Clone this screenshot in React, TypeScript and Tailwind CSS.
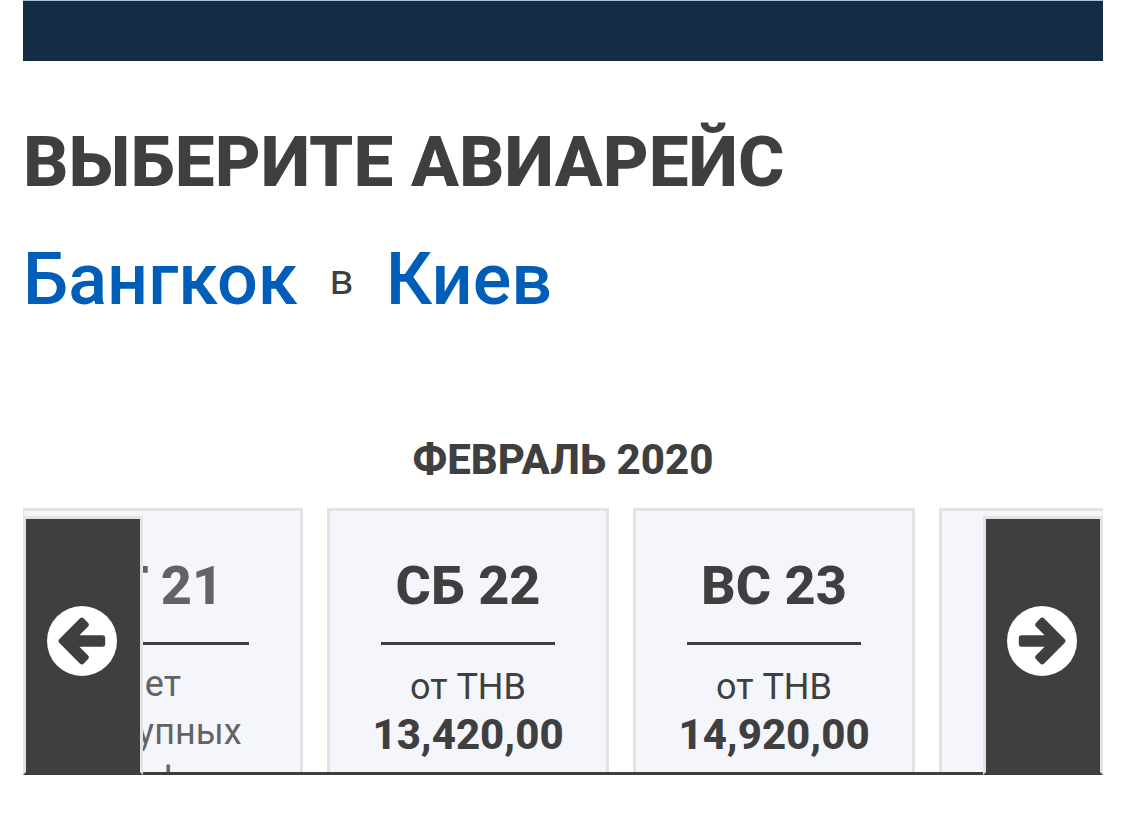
import React from 'react';

interface Day {
  label: string;
  price?: string;
}

const DAYS: Day[] = [
  { label: 'ПТ 21' },
  { label: 'СБ 22', price: '13,420,00' },
  { label: 'ВС 23', price: '14,920,00' },
  { label: '' },
];

const ArrowCircle: React.FC<{ flipped?: boolean }> = ({ flipped }) => (
  <svg viewBox="0 0 70 70" className={`size-[70px] ${flipped ? '-scale-x-100' : ''}`} aria-hidden="true">
    <circle cx="35" cy="35" r="35" fill="#fff" />
    <path
      d="M12.2 33.2 L32.8 12.6 Q34.8 10.6 36.8 12.6 L40.9 16.7 Q42.9 18.7 40.9 20.7 L32.4 29.2 H55.4 Q58.2 29.2 58.2 32 V38 Q58.2 40.8 55.4 40.8 H32.4 L40.9 49.3 Q42.9 51.3 40.9 53.3 L36.8 57.4 Q34.8 59.4 32.8 57.4 L12.2 36.8 Q10.4 35 12.2 33.2 Z"
      fill="#3f3f3f"
    />
  </svg>
);

const DayCard: React.FC<{ day: Day }> = ({ day }) => (
  <li className="w-[282px] shrink-0 border-[3px] border-b-0 border-[#e3e3e3] bg-[#f5f6fb] px-[51px] pt-[43px] text-center">
    {day.label && (
      <>
        <h3 className={`border-b-[3px] border-[#3f3f42] pb-6 text-[54px] leading-[64px] font-extrabold whitespace-nowrap ${day.price ? '' : 'pr-6 text-[#636365]'}`}>
          {day.label}
        </h3>
        {day.price ? (
          <p className="flex flex-col items-center pt-[18px] text-4xl leading-[48px] whitespace-nowrap">
            <span>от THB</span>
            <strong className="text-[42px] leading-[48px] font-extrabold">{day.price}</strong>
          </p>
        ) : (
          <p className="flex flex-col items-center pt-[15px] pr-6 text-4xl leading-[48px] text-[#636365]">
            <span>Нет</span>
            <span>доступных</span>
            <span>тарифов</span>
          </p>
        )}
      </>
    )}
  </li>
);

const App: React.FC = () => {
  return (
    <div className="bg-white pr-[22px] pl-[23px] font-[Roboto,sans-serif] text-[#3f3f3f]">
      <div className="h-[61px] border-t border-[#a9c8dc] bg-[#152c45]"></div>

      <h1 className="mt-[59px] overflow-hidden text-[71px] leading-[84px] font-extrabold uppercase">Выберите авиарейс</h1>

      <div className="mt-9 flex items-center gap-8 text-[72px] leading-[80px]">
        <a href="#from" className="font-medium text-[#005eb8]">Бангкок</a>
        <span className="text-[42px]">в</span>
        <a href="#to" className="font-medium text-[#005eb8]">Киев</a>
      </div>

      <h2 className="mt-[116px] text-center text-[42px] leading-[48px] font-extrabold uppercase">Февраль 2020</h2>

      <div className="relative mt-6 overflow-hidden">
        <ul className="-ml-0.5 flex h-[267px] gap-6 overflow-hidden border-b-[3px] border-[#3f3f42]">
          {DAYS.map((day, i) => (
            <DayCard key={i} day={day} />
          ))}
        </ul>
        <button
          type="button"
          aria-label="Назад"
          className="absolute top-2 bottom-0 left-0 flex w-[120px] items-center justify-center border-[3px] border-[#e3e3e3] border-b-[#3f3f3f] bg-[#3f3f3f] pr-0.5 pb-2.5"
        >
          <ArrowCircle />
        </button>
        <button
          type="button"
          aria-label="Вперёд"
          className="absolute top-2 right-0 bottom-0 flex w-[120px] items-center justify-center border-[3px] border-[#e3e3e3] border-b-[#3f3f3f] bg-[#3f3f3f] pr-0.5 pb-2.5"
        >
          <ArrowCircle flipped />
        </button>
      </div>
    </div>
  );
};

export default App;
